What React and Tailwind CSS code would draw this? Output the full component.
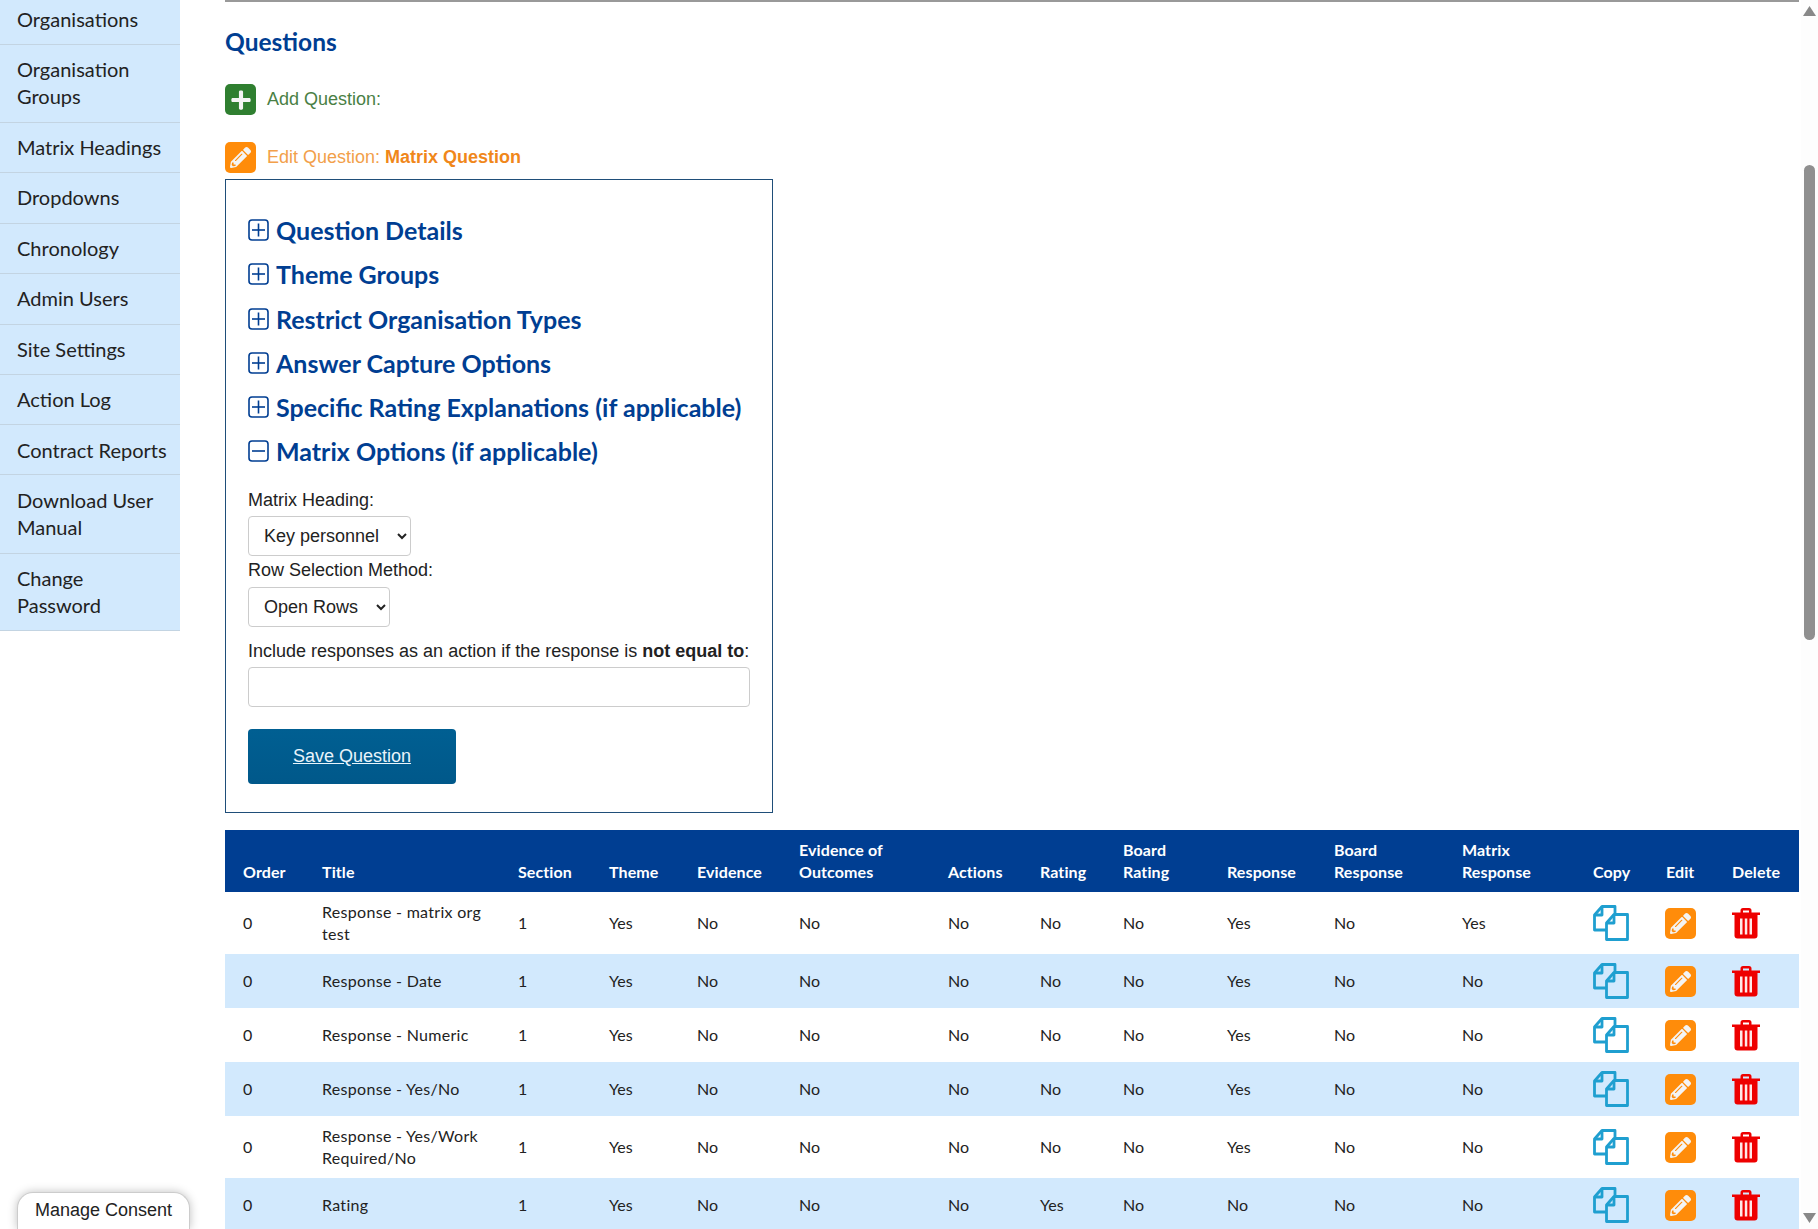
import { FaPencilAlt, FaPlus } from 'react-icons/fa';

const navItems = [
  { label: 'Organisations', h: 'h-[45px] pb-[5px]' },
  { label: 'Organisation Groups', h: 'h-[78px] pb-[2px]' },
  { label: 'Matrix Headings', h: 'h-[50px]' },
  { label: 'Dropdowns', h: 'h-[51px] pb-[2px]' },
  { label: 'Chronology', h: 'h-[50px]' },
  { label: 'Admin Users', h: 'h-[51px] pb-[2px]' },
  { label: 'Site Settings', h: 'h-[50px]' },
  { label: 'Action Log', h: 'h-[50px]' },
  { label: 'Contract Reports', h: 'h-[50px] pt-[2px]' },
  { label: 'Download User Manual', h: 'h-[79px]' },
  { label: 'Change Password', h: 'h-[77px]' },
];

const sections = [
  { label: 'Question Details', h: 'h-[44px]' },
  { label: 'Theme Groups', h: 'h-[44px]' },
  { label: 'Restrict Organisation Types', h: 'h-[45px]' },
  { label: 'Answer Capture Options', h: 'h-[44px]' },
  { label: 'Specific Rating Explanations (if applicable)', h: 'h-[44px]' },
];

const columns = [
  { label: 'Order', w: 'w-[79px]' },
  { label: 'Title', w: 'w-[196px]' },
  { label: 'Section', w: 'w-[91px]' },
  { label: 'Theme', w: 'w-[88px]' },
  { label: 'Evidence', w: 'w-[102px]' },
  { label: 'Evidence of Outcomes', w: 'w-[149px]' },
  { label: 'Actions', w: 'w-[92px]' },
  { label: 'Rating', w: 'w-[83px]' },
  { label: 'Board Rating', w: 'w-[104px]' },
  { label: 'Response', w: 'w-[107px]' },
  { label: 'Board Response', w: 'w-[128px]' },
  { label: 'Matrix Response', w: 'w-[131px]' },
  { label: 'Copy', w: 'w-[73px]' },
  { label: 'Edit', w: 'w-[66px]' },
  { label: 'Delete', w: 'w-[85px]' },
];

const rows = [
  { h: 'h-[62px]', title: 'Response - matrix org test', values: ['Yes', 'No', 'No', 'No', 'No', 'No', 'Yes', 'No', 'Yes'] },
  { h: 'h-[54px]', title: 'Response - Date', values: ['Yes', 'No', 'No', 'No', 'No', 'No', 'Yes', 'No', 'No'] },
  { h: 'h-[54px]', title: 'Response - Numeric', values: ['Yes', 'No', 'No', 'No', 'No', 'No', 'Yes', 'No', 'No'] },
  { h: 'h-[54px]', title: 'Response - Yes/No', values: ['Yes', 'No', 'No', 'No', 'No', 'No', 'Yes', 'No', 'No'] },
  { h: 'h-[62px]', title: 'Response - Yes/Work Required/No', values: ['Yes', 'No', 'No', 'No', 'No', 'No', 'Yes', 'No', 'No'] },
  { h: 'h-[54px]', title: 'Rating', values: ['Yes', 'No', 'No', 'No', 'Yes', 'No', 'No', 'No', 'No'] },
];

function ToggleIcon({ open }) {
  return (
    <svg width="21" height="22" viewBox="0 0 21 22" fill="none" stroke="#003e92" strokeWidth="1.6" className="shrink-0 -translate-y-[1px]">
      <rect x="1" y="1" width="19" height="20" rx="3" />
      <path d="M4 11h13" />
      {!open && <path d="M10.500 4.500v13" />}
    </svg>
  );
}

function CopyIcon() {
  return (
    <svg width="36" height="36" viewBox="0 0 36 36" fill="none" stroke="#1f9fd0" strokeWidth="2.8" strokeLinejoin="round">
      <path d="M13 25H1.500V10L9 1.500h13V9" />
      <path d="M9 1.500V10H1.500" />
      <path d="M21 9.500h13.500v25h-21V18z" />
      <path d="M21 9.500V18h-7.500" />
    </svg>
  );
}

function TrashIcon() {
  return (
    <svg width="28" height="32" viewBox="0 0 28 32" fill="#ee0000">
      <path d="M0 5.500h28v2.500H0z" />
      <path d="M8.500 6V3.500Q8.500 1 11 1h6q2.500 0 2.500 2.500V6H17V3.500h-6V6z" />
      <path d="M2.500 8h23v20.500q0 3-3 3h-17q-3 0-3-3z" />
      <path d="M8 11.500h2.500v16H8zM12.800 11.500h2.500v16h-2.500zM17.500 11.500H20v16h-2.500z" fill="#ffe8e8" />
    </svg>
  );
}

function Tile({ color, children }) {
  return (
    <span className={`flex h-[31px] w-[31px] shrink-0 items-center justify-center rounded-[5px] text-[#f4f4f4] ${color}`}>
      {children}
    </span>
  );
}

function Field({ label, children }) {
  return (
    <div className="font-['Liberation_Sans',sans-serif] text-[18px] leading-[24px] text-[#222]">
      <label className="block">{label}</label>
      {children}
    </div>
  );
}

export default function App() {
  return (
    <div className="relative flex h-screen overflow-hidden bg-white">
      <aside className="w-[180px] shrink-0 font-['Lato',sans-serif] text-[20px] leading-[27px] text-[#222]">
        {navItems.map((item) => (
          <div key={item.label} className={`flex items-center border-b border-[#c3d4e2] bg-[#d2e9fd] pl-[17px] pr-2 ${item.h}`}>
            {item.label}
          </div>
        ))}
      </aside>

      <main className="min-w-0 flex-1 pl-[45px] pr-[2px]">
        <div className="border-t-2 border-[#999]" />
        <h1 className="mt-[25px] font-['Lato',sans-serif] text-[24.5px] font-bold leading-[30px] text-[#003e92]">Questions</h1>

        <div className="mt-[27px] flex h-[31px] items-center gap-[11px] font-['Liberation_Sans',sans-serif] text-[18px] text-[#4a7f45]">
          <Tile color="bg-[#2f7f30]"><FaPlus size={22} /></Tile>
          Add Question:
        </div>
        <div className="mt-[27px] flex h-[31px] items-center gap-[11px] font-['Liberation_Sans',sans-serif] text-[18px] text-[#f2a04a]">
          <Tile color="bg-[#ff8c0a]"><FaPencilAlt size={21} /></Tile>
          <span>Edit Question: <b className="text-[#f0871a]">Matrix Question</b></span>
        </div>

        <section className="mt-[6px] h-[634px] w-[548px] border border-[#1f4e79] pl-[22px] pr-[22px] pt-[29px]">
          {sections.map((s) => (
            <div key={s.label} className={`flex items-center gap-[7px] font-['Lato',sans-serif] text-[25px] font-bold text-[#003e92] ${s.h}`}>
              <ToggleIcon />
              {s.label}
            </div>
          ))}
          <div className="flex h-[44px] items-center gap-[7px] font-['Lato',sans-serif] text-[25px] font-bold text-[#003e92]">
            <ToggleIcon open />
            Matrix Options (if applicable)
          </div>

          <div className="mt-[14px]">
            <Field label="Matrix Heading:">
              <select className="mt-[4px] block h-[40px] w-[163px] rounded-[4px] border border-[#ccc] bg-white pl-[11px]">
                <option>Key personnel</option>
              </select>
            </Field>
          </div>
          <div className="mt-[2px]">
            <Field label="Row Selection Method:">
              <select className="mt-[5px] block h-[40px] w-[142px] rounded-[4px] border border-[#ccc] bg-white pl-[11px]">
                <option>Open Rows</option>
              </select>
            </Field>
          </div>
          <div className="mt-[12px]">
            <Field label={<>Include responses as an action if the response is <b>not equal to</b>:</>}>
              <input className="mt-[4px] block h-[40px] w-[502px] rounded-[4px] border border-[#ccc] bg-white" />
            </Field>
          </div>
          <button className="mt-[22px] flex h-[55px] w-[208px] items-center justify-center rounded-[4px] bg-gradient-to-b from-[#005f92] to-[#00588a] font-['Liberation_Sans',sans-serif] text-[18px] text-[#e8f4fb] underline">
            Save Question
          </button>
        </section>

        <table className="mt-[17px] w-[1574px] table-fixed border-collapse font-['Lato',sans-serif] text-[16px] leading-[22px] text-[#222]">
          <colgroup>
            {columns.map((c) => <col key={c.label} className={c.w} />)}
          </colgroup>
          <thead>
            <tr className="h-[62px] bg-[#003e92] text-white">
              {columns.map((c) => (
                <th key={c.label} className="pb-[9px] pl-[18px] pr-[8px] text-left align-bottom font-bold tracking-[0.1px]">{c.label}</th>
              ))}
            </tr>
          </thead>
          <tbody>
            {rows.map((r, i) => (
              <tr key={r.title} className={`${r.h} ${i % 2 ? 'bg-[#d2e9fd]' : 'bg-white'}`}>
                <td className="pl-[18px]">0</td>
                <td className="pl-[18px] pr-[12px] tracking-[0.3px]">{r.title}</td>
                <td className="pl-[18px]">1</td>
                {r.values.map((v, j) => <td key={j} className="pl-[18px]">{v}</td>)}
                <td className="pl-[18px]"><CopyIcon /></td>
                <td className="pl-[17px]">
                  <Tile color="bg-[#ff8c0a]"><FaPencilAlt size={21} /></Tile>
                </td>
                <td className="pl-[18px]"><TrashIcon /></td>
              </tr>
            ))}
          </tbody>
        </table>
      </main>

      <div className="flex w-[17px] shrink-0 flex-col items-center bg-[#fdfdfd]">
        <svg width="13" height="10" viewBox="0 0 13 10" className="mt-[6px] shrink-0" fill="#888"><path d="M6.500 0 13 10H0z" /></svg>
        <div className="mt-[149px] h-[475px] w-[11px] shrink-0 rounded-full bg-[#8f8f8f]" />
        <svg width="13" height="10" viewBox="0 0 13 10" className="mt-auto mb-[6px] shrink-0" fill="#888"><path d="M6.500 10 13 0H0z" /></svg>
      </div>

      <button className="absolute bottom-0 left-[17px] h-[37px] w-[173px] rounded-t-[16px] border border-b-0 border-[#ccc] bg-white pb-[2px] font-['Liberation_Sans',sans-serif] text-[18px] text-[#222] shadow-[0_0_10px_rgba(0,0,0,0.25)]">
        Manage Consent
      </button>
    </div>
  );
}
